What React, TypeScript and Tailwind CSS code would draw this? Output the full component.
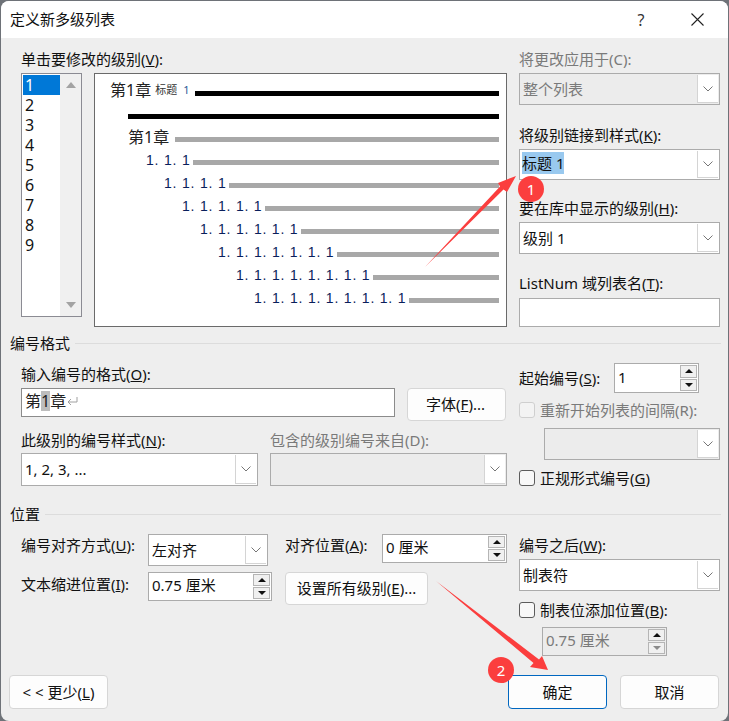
import type { ReactNode } from "react"

const levels = [1, 2, 3, 4, 5, 6, 7, 8, 9]

// 预览区里的编号行
const previewRows = [
  { text: "1. 1. 1", pl: "pl-[51px]", bar: "w-[306px]" },
  { text: "1. 1. 1. 1", pl: "pl-[69px]", bar: "w-[270px]" },
  { text: "1. 1. 1. 1. 1", pl: "pl-[87px]", bar: "w-[234px]" },
  { text: "1. 1. 1. 1. 1. 1", pl: "pl-[105px]", bar: "w-[198px]" },
  { text: "1. 1. 1. 1. 1. 1. 1", pl: "pl-[123px]", bar: "w-[162px]" },
  { text: "1. 1. 1. 1. 1. 1. 1. 1", pl: "pl-[141px]", bar: "w-[126px]" },
  { text: "1. 1. 1. 1. 1. 1. 1. 1. 1", pl: "pl-[159px]", bar: "w-[90px]" },
]

function Label({ children, muted, className = "" }: { children: ReactNode; muted?: boolean; className?: string }) {
  return (
    <div className={`h-5 leading-5 whitespace-nowrap ${muted ? "text-[#7a7a7a]" : "text-[#111]"} ${className}`}>
      {children}
    </div>
  )
}

function Chevron() {
  return (
    <svg width="10" height="6" viewBox="0 0 10 6" fill="none">
      <path d="M0.5 0.5 L5 5 L9.5 0.5" stroke="#666" strokeWidth="0.9" />
    </svg>
  )
}

function Select({ value, muted, className = "", children }: { value?: string; muted?: boolean; className?: string; children?: ReactNode }) {
  return (
    <div className={`flex items-stretch border border-[#ababab] ${muted ? "bg-[#ececec] text-[#7a7a7a]" : "bg-white text-[#111]"} ${className}`}>
      <div className="flex-1 flex items-center pl-[3px] whitespace-nowrap overflow-hidden">{children ?? value}</div>
      <div className="w-[21px] flex items-center justify-center bg-white border-l border-b border-[#d4d4d4] my-px mr-px">
        <Chevron />
      </div>
    </div>
  )
}

function Spin({ value, muted, className = "" }: { value: string; muted?: boolean; className?: string }) {
  return (
    <div className={`flex items-stretch border border-[#ababab] ${muted ? "bg-[#ececec] text-[#7a7a7a]" : "bg-white text-[#111]"} ${className}`}>
      <div className="flex-1 flex items-center pl-[3px] pb-[2px] whitespace-nowrap">{value}</div>
      <div className="w-[19px] flex flex-col gap-px p-px">
        <div className="flex-1 flex items-center justify-center bg-[#f0f0f0] border border-[#b5b5b5]">
          <div className="w-0 h-0 border-x-[4px] border-x-transparent border-b-[4px] border-b-[#111]" />
        </div>
        <div className="flex-1 flex items-center justify-center bg-[#f0f0f0] border border-[#b5b5b5]">
          <div className={`w-0 h-0 border-x-[4px] border-x-transparent border-t-[4px] ${muted ? "border-t-[#8a8a8a]" : "border-t-[#111]"}`} />
        </div>
      </div>
    </div>
  )
}

function Check({ children, muted }: { children: ReactNode; muted?: boolean }) {
  return (
    <div className="flex items-center h-4 gap-[5px]">
      <div className={`w-4 h-4 rounded-[3px] border ${muted ? "border-[#cfcfcf] bg-[#f3f3f3]" : "border-[#5c5c5c] bg-[#f8f8f8]"}`} />
      <div className={`whitespace-nowrap leading-5 ${muted ? "text-[#7a7a7a]" : "text-[#111]"}`}>{children}</div>
    </div>
  )
}

function Btn({ children, primary, className = "" }: { children: ReactNode; primary?: boolean; className?: string }) {
  return (
    <div className={`flex items-center justify-center rounded-[4px] bg-[#fdfdfd] text-[#111] border whitespace-nowrap ${primary ? "border-[#0067c0]" : "border-[#d6d6d6]"} ${className}`}>
      {children}
    </div>
  )
}

function GroupTitle({ children }: { children: ReactNode }) {
  return (
    <div className="flex items-center h-5 gap-[5px] pl-[9px] pr-[7px] text-[#111]">
      <span className="whitespace-nowrap">{children}</span>
      <div className="flex-1 h-px bg-[#dcdcdc]" />
    </div>
  )
}

function Bar({ className }: { className: string }) {
  return <div className={`h-[5px] ${className}`} />
}

export default function App() {
  return (
    <div className="relative w-[729px] h-[721px] overflow-hidden bg-[#6e7278] text-[15px] [font-family:'Noto_Sans','Noto_Sans_CJK_SC',sans-serif]">
      <div className="w-[727px] h-[720px] ml-px mt-px rounded-[8px] overflow-hidden bg-[#eeeeee]">
        {/* 标题栏 */}
        <div className="h-[37px] bg-white flex items-center pl-[9px] text-[#111]">
          <span className="flex-1">定义新多级列表</span>
          <span className="w-[20px] text-center text-[16px] text-[#333]">?</span>
          <svg className="ml-[40px] mr-[24px]" width="13" height="13" viewBox="0 0 13 13" fill="none">
            <path d="M0.5 0.5 L12.5 12.5 M12.5 0.5 L0.5 12.5" stroke="#222" strokeWidth="1.1" />
          </svg>
        </div>

        {/* 级别与预览 */}
        <div className="flex pl-5 pt-[11px]">
          <div className="w-[486px]">
            <Label>单击要修改的级别(<u>V</u>):</Label>
            <div className="flex mt-1 items-start gap-3">
              <div className="w-[61px] h-[244px] flex border border-[#8b8b93] bg-white">
                <div className="w-[38px] pl-px pt-px text-[16px] text-[#111]">
                  {levels.map((n) => (
                    <div key={n} className={`h-5 leading-5 pl-[2px] ${n === 1 ? "bg-[#0078d7] text-white" : ""}`}>
                      {n}
                    </div>
                  ))}
                </div>
                <div className="flex-1 bg-[#f0f0f0] flex flex-col items-center justify-between py-2">
                  <div className="w-0 h-0 border-x-[5px] border-x-transparent border-b-[6px] border-b-[#a3a3a3]" />
                  <div className="w-0 h-0 border-x-[5px] border-x-transparent border-t-[6px] border-t-[#a3a3a3]" />
                </div>
              </div>
              <div className="w-[413px] h-[254px] border border-[#6a6a6a] bg-white pr-[7px] pt-[6px]">
                <div className="flex items-center h-[20px] pl-[15px]">
                  <span className="text-[16px] text-[#222] whitespace-nowrap">第1章</span>
                  <span className="ml-[4px] text-[11px] text-[#333] whitespace-nowrap">标题</span>
                  <span className="ml-[6px] text-[11px] text-[#2b5797]">1</span>
                  <Bar className="ml-auto w-[304px] mt-[6px] bg-black" />
                </div>
                <Bar className="mt-[14px] ml-[33px] bg-black" />
                <div className="flex items-center h-[20px] mt-[8px] pl-[33px]">
                  <span className="text-[16px] text-[#222] whitespace-nowrap">第1章</span>
                  <Bar className="ml-auto w-[324px] mt-[5px] bg-[#a8a8a8]" />
                </div>
                {previewRows.map((r) => (
                  <div key={r.text} className={`flex items-center justify-between h-[20px] mt-[3px] ${r.pl}`}>
                    <span className="text-[14px] tracking-[0.8px] text-[#0a1f5c] whitespace-nowrap [font-family:'Liberation_Sans',sans-serif]">{r.text}</span>
                    <Bar className={`bg-[#a8a8a8] mt-[5px] ${r.bar}`} />
                  </div>
                ))}
              </div>
            </div>
          </div>
          <div className="w-[201px] ml-[12px]">
            <Label muted>将更改应用于(C):</Label>
            <Select muted value="整个列表" className="h-[32px] mt-1" />
            <Label className="mt-5">将级别链接到样式(<u>K</u>):</Label>
            <Select className="h-[31px] mt-1">
              <span className="bg-[#99c9ef] -ml-px mb-[3px]">标题 1</span>
            </Select>
            <Label className="mt-[18px]">要在库中显示的级别(<u>H</u>):</Label>
            <Select value="级别 1" className="h-[32px] mt-[4px]" />
            <Label className="mt-[19px]">ListNum 域列表名(<u>T</u>):</Label>
            <div className="h-[29px] mt-[5px] bg-white border border-[#ababab]" />
          </div>
        </div>

        {/* 编号格式 */}
        <div className="mt-[6px]">
          <GroupTitle>编号格式</GroupTitle>
          <div className="flex pl-5">
            <div className="w-[486px] pt-[11px]">
              <Label>输入编号的格式(<u>O</u>):</Label>
              <div className="flex items-start gap-3 mt-1">
                <div className="w-[374px] h-[29px] flex items-center pl-[3px] pb-[3px] bg-white border border-[#8b8b8b] text-[16px] text-[#222]">
                  第<span className="bg-[#bdbdbd] leading-5">1</span>章
                  <svg className="ml-px" width="11" height="10" viewBox="0 0 11 10" fill="none">
                    <path d="M10 1 V6 H1 M4 3 L1 6 L4 9" stroke="#a0a0a0" strokeWidth="1" />
                  </svg>
                </div>
                <Btn className="w-[99px] h-[33px] pr-[2px]">字体(<u>F</u>)...</Btn>
              </div>
              <Label className="mt-[9px]">此级别的编号样式(<u>N</u>):</Label>
              <div className="flex gap-3 mt-[3px]">
                <Select value="1, 2, 3, ..." className="w-[237px] h-[33px]" />
                <div className="w-[237px]">
                  <Label muted className="-mt-[23px] mb-[3px]">包含的级别编号来自(D):</Label>
                  <Select muted className="h-[33px]" />
                </div>
              </div>
            </div>
            <div className="w-[201px] ml-[12px] pt-[10px]">
              <div className="flex items-center h-[30px]">
                <div className="w-[95px] text-[#111] whitespace-nowrap">起始编号(<u>S</u>):</div>
                <Spin value="1" className="w-[85px] h-[30px]" />
              </div>
              <div className="mt-[9px]">
                <Check muted>重新开始列表的间隔(R):</Check>
              </div>
              <Select muted className="ml-[25px] w-[176px] h-[32px] mt-[10px]" />
              <div className="mt-[10px]">
                <Check>正规形式编号(<u>G</u>)</Check>
              </div>
            </div>
          </div>
        </div>

        {/* 位置 */}
        <div className="mt-[18px]">
          <GroupTitle>位置</GroupTitle>
          <div className="flex pl-5">
            <div className="w-[486px]">
              <div className="flex items-start mt-[10px] h-[32px]">
                <Label className="w-[127px] mt-px">编号对齐方式(<u>U</u>):</Label>
                <Select value="左对齐" className="w-[120px] h-[32px]" />
                <Label className="w-[97px] ml-[17px] mt-px">对齐位置(<u>A</u>):</Label>
                <Spin value="0 厘米" className="w-[125px] h-[29px]" />
              </div>
              <div className="flex items-start mt-[6px]">
                <Label className="w-[127px] mt-[2px]">文本缩进位置(<u>I</u>):</Label>
                <Spin value="0.75 厘米" className="w-[124px] h-[29px]" />
                <Btn className="w-[143px] h-[33px] ml-[13px]">设置所有级别(<u>E</u>)...</Btn>
              </div>
            </div>
            <div className="w-[201px] ml-[12px] pt-[11px]">
              <Label>编号之后(<u>W</u>):</Label>
              <Select value="制表符" className="h-[32px] mt-1" />
              <div className="mt-[11px]">
                <Check>制表位添加位置(<u>B</u>):</Check>
              </div>
              <Spin muted value="0.75 厘米" className="ml-[23px] w-[125px] h-[29px] mt-[9px]" />
            </div>
          </div>
        </div>

        {/* 底部按钮 */}
        <div className="flex items-start mt-[19px] pl-2">
          <Btn className="w-[99px] h-[34px]">&lt; &lt; 更少(<u>L</u>)</Btn>
          <Btn primary className="w-[99px] h-[34px] ml-[400px]">确定</Btn>
          <Btn className="w-[99px] h-[34px] ml-[13px]">取消</Btn>
        </div>
      </div>

      {/* 红色标注 */}
      <svg className="absolute inset-0 pointer-events-none" width="729" height="721" viewBox="0 0 729 721">
        <polygon points="425,267 500,186.5 498,183 516,176 507,192 503.5,189.5" fill="#fb3e3e" />
        <polygon points="436,581 539,659.5 542,656 548,670 530,667 533.5,663" fill="#fb3e3e" />
        <circle cx="531" cy="189" r="13" fill="#fb3e3e" />
        <circle cx="501" cy="670" r="13" fill="#fb3e3e" />
        <text x="531" y="194.5" textAnchor="middle" fontSize="15" fill="#fff" fontFamily="Noto Sans, sans-serif">1</text>
        <text x="501" y="675.5" textAnchor="middle" fontSize="15" fill="#fff" fontFamily="Noto Sans, sans-serif">2</text>
      </svg>
    </div>
  )
}
